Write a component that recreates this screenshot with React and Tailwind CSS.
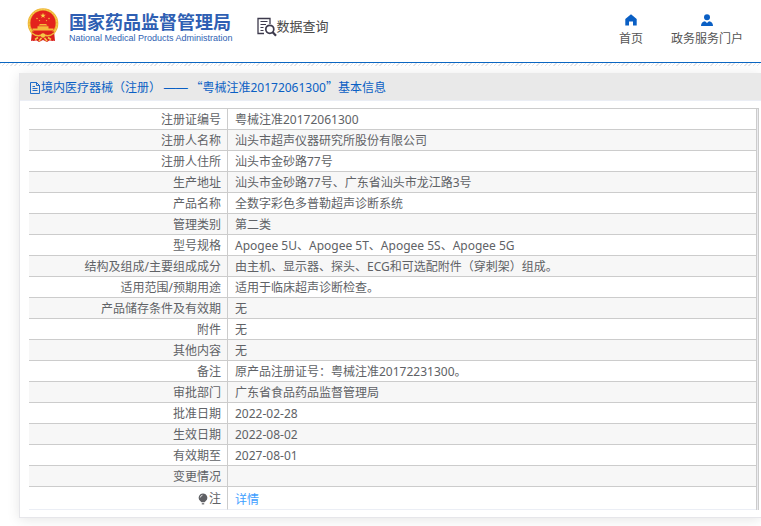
import React from "react";

const rows = [
  { label: "注册证编号", value: "粤械注准20172061300" },
  { label: "注册人名称", value: "汕头市超声仪器研究所股份有限公司" },
  { label: "注册人住所", value: "汕头市金砂路77号" },
  { label: "生产地址", value: "汕头市金砂路77号、广东省汕头市龙江路3号" },
  { label: "产品名称", value: "全数字彩色多普勒超声诊断系统" },
  { label: "管理类别", value: "第二类" },
  { label: "型号规格", value: "Apogee 5U、Apogee 5T、Apogee 5S、Apogee 5G" },
  {
    label: "结构及组成/主要组成成分",
    value: "由主机、显示器、探头、ECG和可选配附件（穿刺架）组成。",
  },
  { label: "适用范围/预期用途", value: "适用于临床超声诊断检查。" },
  { label: "产品储存条件及有效期", value: "无" },
  { label: "附件", value: "无" },
  { label: "其他内容", value: "无" },
  { label: "备注", value: "原产品注册证号：粤械注准20172231300。" },
  { label: "审批部门", value: "广东省食品药品监督管理局" },
  { label: "批准日期", value: "2022-02-28" },
  { label: "生效日期", value: "2022-08-02" },
  { label: "有效期至", value: "2027-08-01" },
  { label: "变更情况", value: "" },
];

const Emblem = () => (
  <svg viewBox="0 0 32 34" className="h-[34px] w-8 shrink-0" aria-hidden="true">
    <path d="M5 23 L4 33 L9 32 L12 34 L16 32 L20 34 L23 32 L28 33 L27 23 Z" fill="#d8201c" />
    <circle cx="16" cy="15.5" r="15.3" fill="#efb435" />
    <circle cx="16" cy="15.5" r="14" fill="none" stroke="#f8d75c" strokeWidth="1" strokeDasharray="2 1" />
    <circle cx="16" cy="15" r="12.6" fill="#e3231d" />
    <path d="M16 4.8l.7 1.9h2.1l-1.7 1.300 .6 2L16 8.800l-1.700 1.200 .6-2-1.700-1.300h2.100z" fill="#fbd34a" />
    <g fill="#f5b83c">
      <circle cx="10" cy="10.5" r=".8" />
      <circle cx="12.5" cy="12.6" r=".7" />
      <circle cx="19.5" cy="12.6" r=".7" />
      <circle cx="22" cy="10.5" r=".8" />
      <path d="M11.5 17.6 L13 16 H19 L20.5 17.6 Z" />
      <path d="M10.5 18.2 H21.5 V20.5 H26.5 V22.5 H5.5 V20.5 H10.5 Z" />
    </g>
    <path d="M5 23.5 H27 L26 33 L21 32 H11 L6 33 Z" fill="#dc201c" />
    <path d="M5 25 Q10 29.5 16 26.5 Q22 29.5 27 25" fill="none" stroke="#f0b93a" strokeWidth="1.4" />
    <circle cx="16" cy="27.5" r="2.2" fill="#f5c648" />
    <path d="M8 31.5 L11 29.5 M24 31.5 L21 29.5 M14.5 30 L12 33 M17.5 30 L20 33" stroke="#f5c648" strokeWidth="1.6" />
  </svg>
);

const SearchDocIcon = () => (
  <svg viewBox="0 0 20 20" className="h-5 w-5 shrink-0" fill="none" stroke="#3d3a4c" aria-hidden="true">
    <path d="M13 7 V1.5 H1 V16.5 H7" strokeWidth="1.3" />
    <path d="M3.5 4.5 H10.5 M3.5 7.5 H9 M3.5 10.5 H6.5 M3.5 13.5 H6.5" strokeWidth="1.1" />
    <circle cx="12.8" cy="12.3" r="4" strokeWidth="1.7" />
    <path d="M15.7 15.3 L19 18.8" strokeWidth="2.2" />
  </svg>
);

const HomeIcon = () => (
  <svg viewBox="0 0 12 12" className="h-3 w-3" fill="#0a5fc4" aria-hidden="true">
    <path d="M6 0.3 L11.7 5 V11.5 H8 V7.5 H4 V11.5 H0.3 V5 Z" />
  </svg>
);

const UserIcon = () => (
  <svg viewBox="0 0 12 12" className="h-3 w-3" fill="#0a5fc4" aria-hidden="true">
    <circle cx="6" cy="3.2" r="3" />
    <path d="M0 12 Q0 7.8 4 7.2 L6 9 L8 7.2 Q12 7.8 12 12 Z" />
  </svg>
);

const DocumentIcon = () => (
  <svg viewBox="0 0 12 12" className="h-3 w-3 shrink-0" fill="none" stroke="#0a5fc4" aria-hidden="true">
    <path d="M1.5 .5 H7.5 L10.5 3.5 V11.5 H1.5 Z M7.5 .5 V3.5 H10.5" strokeWidth="0.9" />
    <path d="M3.5 4.5 H6 M3.5 6.5 H8.5 M3.5 8.5 H8.5" strokeWidth="0.9" />
  </svg>
);

const BulbIcon = () => (
  <svg viewBox="0 0 10 12" className="h-3 w-2.5" aria-hidden="true">
    <path d="M5 .5 A4.3 4.3 0 0 1 7.5 8.3 L6.5 9.3 H3.5 L2.5 8.3 A4.3 4.3 0 0 1 5 .5 Z" fill="#5f6064" />
    <path d="M3.8 10.8 H6.2" stroke="#5f6064" strokeWidth="1.2" />
    <path d="M2.3 4.5 A2.7 2.7 0 0 1 4.5 2.2" fill="none" stroke="#fff" strokeWidth="0.8" />
  </svg>
);

const Header = () => (
  <header>
    <div className="flex h-[62px] justify-between pr-[18px] pl-[27px]">
      <div className="flex items-start">
        <a href="#home" className="flex items-start gap-[10px] pt-2">
          <Emblem />
          <span className="flex flex-col pt-1 text-[#2f5fb3]">
            <span className="text-[18px] leading-[20px] font-bold whitespace-nowrap">
              国家药品监督管理局
            </span>
            <span className="font-['Liberation_Sans',sans-serif] text-[9px] leading-[12px] whitespace-nowrap">
              National Medical Products Administration
            </span>
          </span>
        </a>
        <div className="ml-6 flex items-start pt-[17px] text-[#484848]">
          <SearchDocIcon />
          <span className="text-[13px] leading-[18px] whitespace-nowrap">数据查询</span>
        </div>
      </div>
      <nav className="flex gap-7 pt-[14px] text-xs text-[#555]">
        <a href="#index" className="flex flex-col items-center gap-1">
          <HomeIcon />
          <span className="leading-[18px] whitespace-nowrap">首页</span>
        </a>
        <a href="#portal" className="flex flex-col items-center gap-1">
          <UserIcon />
          <span className="leading-[18px] whitespace-nowrap">政务服务门户</span>
        </a>
      </nav>
    </div>
    <div className="h-px bg-[#0a66c2]"></div>
    <div className="h-[3px] bg-[repeating-linear-gradient(135deg,#e4e4e8_0px,#e4e4e8_1px,#fff_1px,#fff_3px)]"></div>
  </header>
);

const App = () => {
  return (
    <div
      lang="zh-CN"
      className="overflow-x-hidden bg-white pb-2 font-['Noto_Sans','Noto_Sans_CJK_SC',sans-serif] text-[#606266]"
    >
      <Header />

      <main className="mt-[7px] ml-[19px] border-b border-l border-[#e6e6ea] shadow-[0_2px_12px_0_rgba(0,0,0,0.1)]">
        <h1 className="flex h-7 items-center border-b border-[#ebeef5] bg-[#e9e9e9] pt-[2px] pl-[9px] text-xs text-[#0a5fc4]">
          <DocumentIcon />
          <span className="font-['Noto_Sans_CJK_SC',sans-serif] whitespace-nowrap">
            境内医疗器械（注册）{" "}
            <span className="font-['Liberation_Sans',sans-serif]">——</span>{" "}
            “粤械注准
            <span className="font-['Noto_Sans',sans-serif]">20172061300</span>
            ”基本信息
          </span>
        </h1>

        <div className="mt-[7px] mr-[2px] mb-[7px] ml-[9px] border-t border-r border-[#ccc] bg-[#ebebef] pr-px">
          <table className="w-full border-separate border-spacing-0 border-r border-[#ccc] bg-white text-xs">
            <tbody>
              {rows.map((row) => (
                <tr key={row.label} className="even:bg-[#f7f7f7]">
                  <th
                    scope="row"
                    className="h-[21px] w-[199px] border-r border-b border-[#ccc] pt-[2px] pr-[6px] pb-0 pl-0 text-right leading-[18px] font-normal"
                  >
                    {row.label}
                  </th>
                  <td className="h-[21px] border-b border-[#ccc] pt-[2px] pr-0 pb-0 pl-[7px] leading-[18px]">
                    {row.value}
                  </td>
                </tr>
              ))}
              {/* Note row with the details link */}
              <tr>
                <th
                  scope="row"
                  className="h-[23px] w-[199px] border-r border-b border-r-[#ccc] border-b-[#ebeef5] pt-[2px] pr-[6px] pb-0 pl-0 leading-[18px] font-normal"
                >
                  <span className="flex items-center justify-end gap-px">
                    <BulbIcon />
                    注
                  </span>
                </th>
                <td className="h-[23px] border-b border-[#ebeef5] pt-1 pr-0 pb-0 pl-[7px] leading-[18px]">
                  <a href="#detail" className="text-[#409eff]">
                    详情
                  </a>
                </td>
              </tr>
            </tbody>
          </table>
        </div>
      </main>
    </div>
  );
};

export default App;
